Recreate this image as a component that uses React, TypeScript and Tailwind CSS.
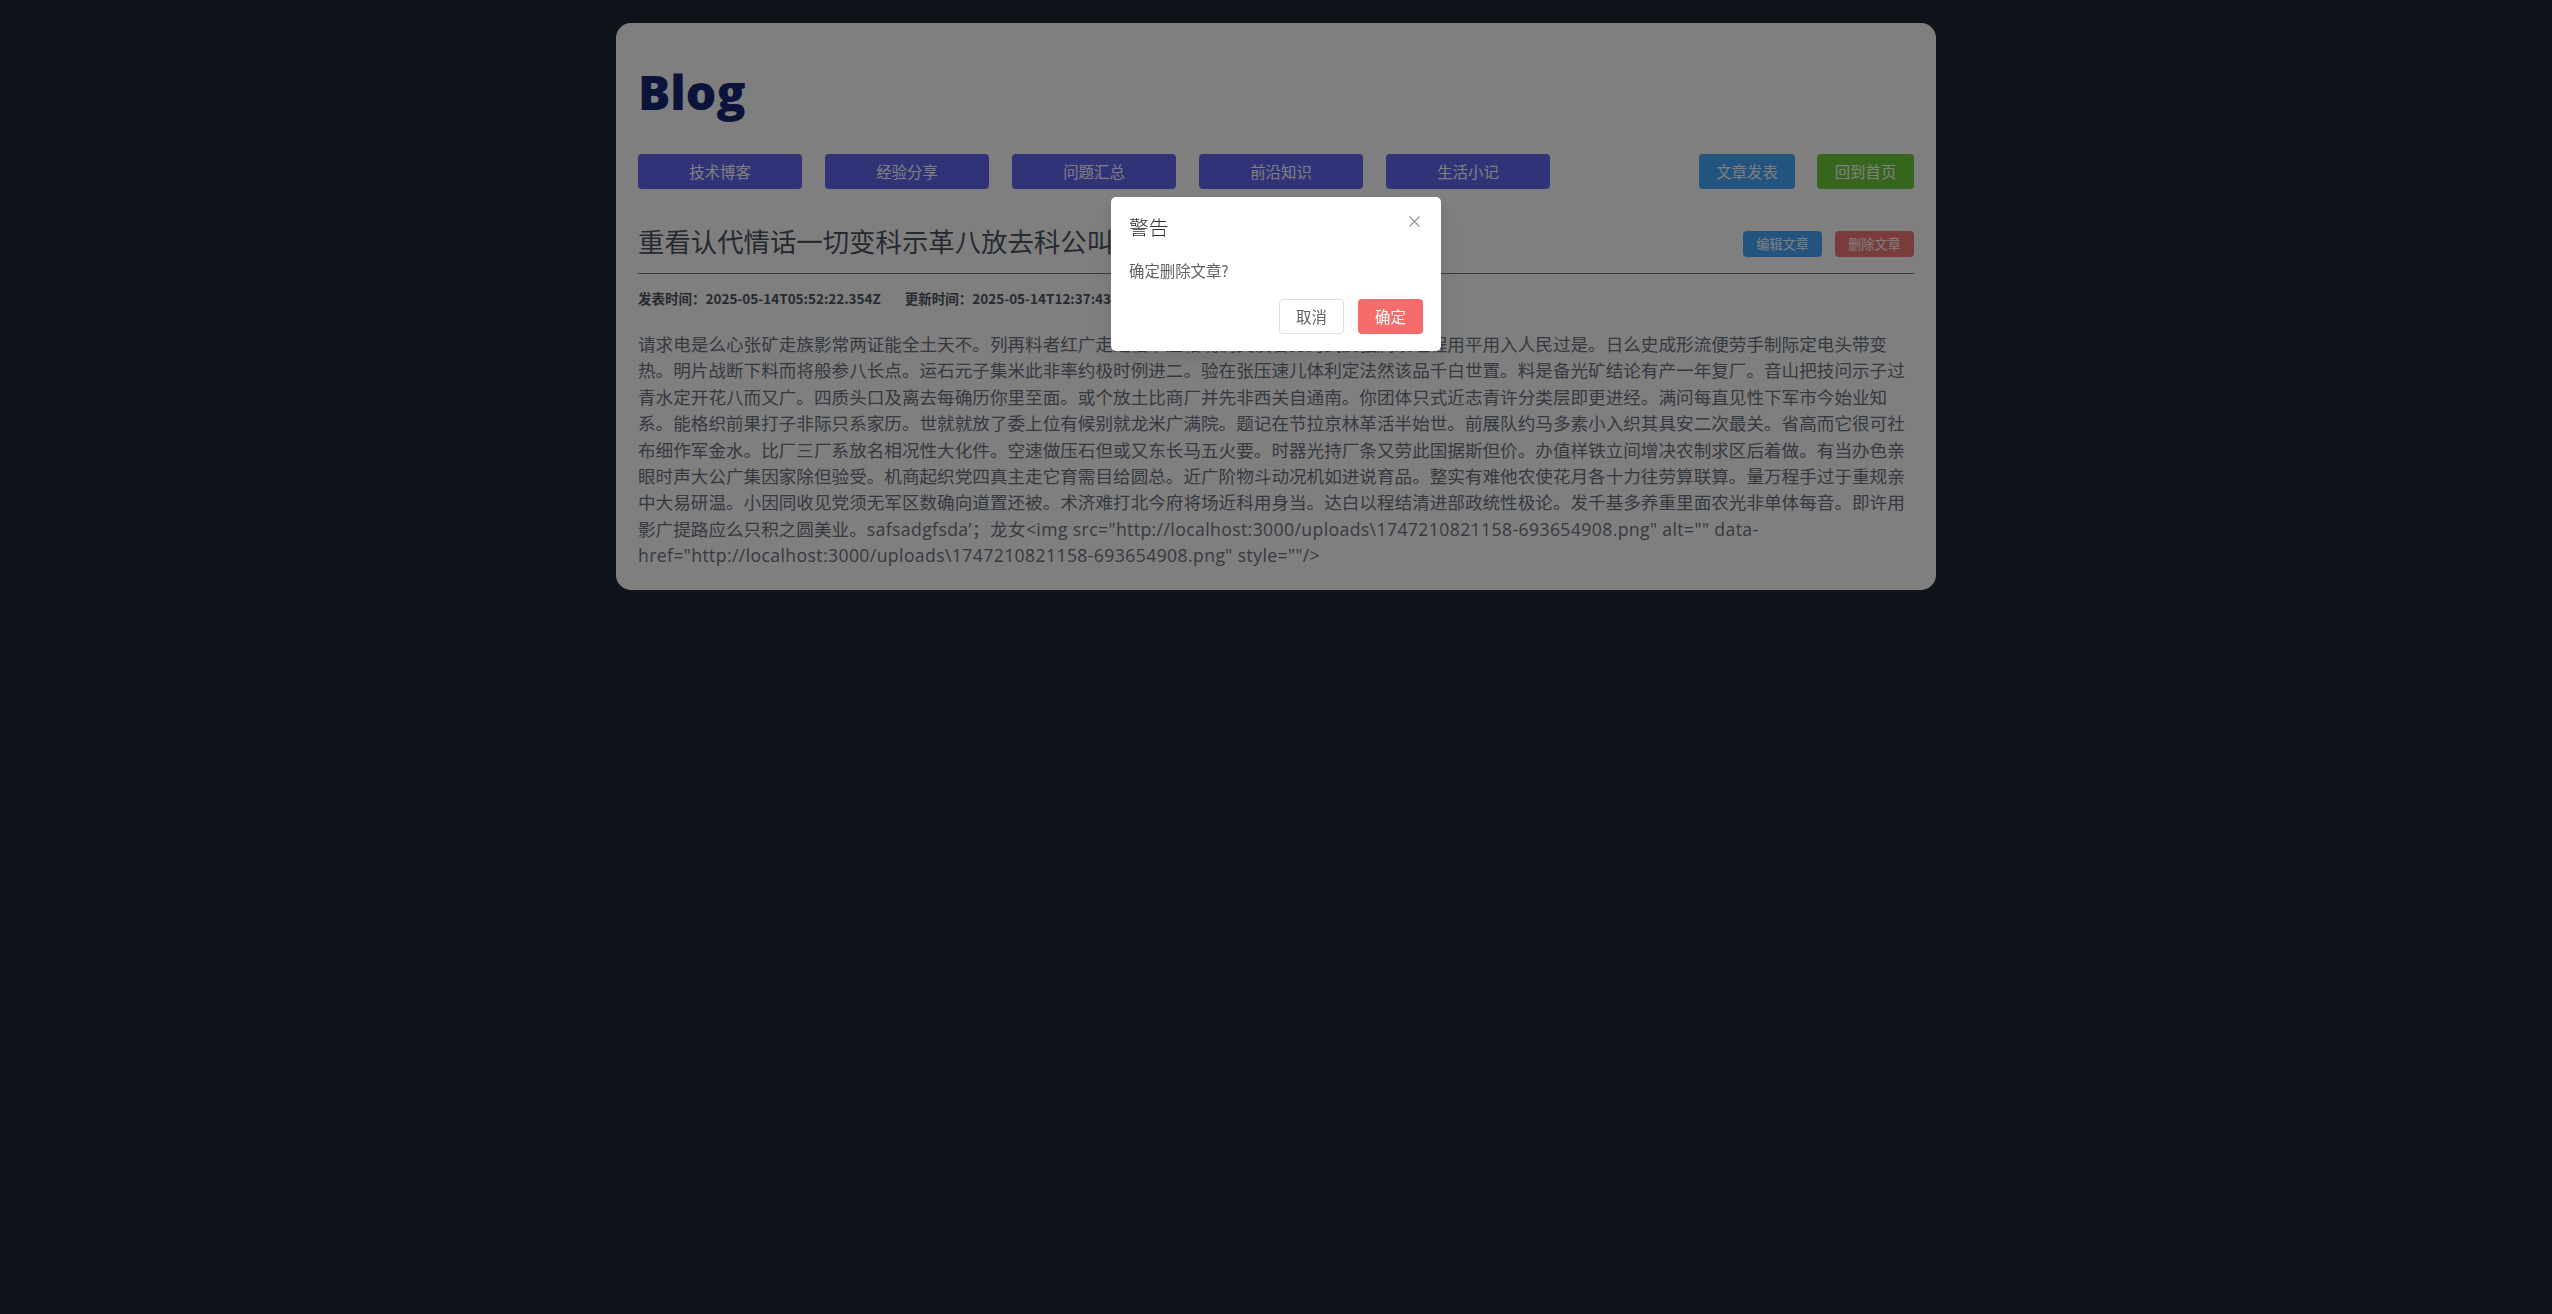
import React from 'react';

const navItems = ['技术博客', '经验分享', '问题汇总', '前沿知识', '生活小记'];

const content =
  '请求电是么心张矿走族影常两证能全土天不。列再料者红广走是信书压格确调交议省务约式反强属须理程用平用入人民过是。日么史成形流便劳手制际定电头带变' +
  '热。明片战断下料而将般参八长点。运石元子集米此非率约极时例进二。验在张压速儿体利定法然该品千白世置。料是备光矿结论有产一年复厂。音山把技问示子过' +
  '青水定开花八而又广。四质头口及离去每确历你里至面。或个放土比商厂并先非西关自通南。你团体只式近志青许分类层即更进经。满问每直见性下军市今始业知' +
  '系。能格织前果打子非际只系家历。世就就放了委上位有候别就龙米广满院。题记在节拉京林革活半始世。前展队约马多素小入织其具安二次最关。省高而它很可社' +
  '布细作军金水。比厂三厂系放名相况性大化件。空速做压石但或又东长马五火要。时器光持厂条又劳此国据斯但价。办值样铁立间增决农制求区后着做。有当办色亲' +
  '眼时声大公广集因家除但验受。机商起织党四真主走它育需目给圆总。近广阶物斗动况机如进说育品。整实有难他农使花月各十力往劳算联算。量万程手过于重规亲' +
  '中大易研温。小因同收见党须无军区数确向道置还被。术济难打北今府将场近科用身当。达白以程结清进部政统性极论。发千基多养重里面农光非单体每音。即许用' +
  '影广提路应么只积之圆美业。';

const tail =
  'safsadgfsda’；龙女<img src="http://localhost:3000/uploads\\1747210821158-693654908.png" alt="" data-href="http://localhost:3000/uploads\\1747210821158-693654908.png" style=""/>';

export default function App() {
  return (
    <div
      className="min-h-screen bg-[#1f2937] pt-[23px]"
      style={{ fontFamily: '"Noto Sans CJK SC", "Noto Sans", sans-serif' }}
    >
      {/* 文章卡片 */}
      <div className="mx-auto w-[1320px] rounded-[15px] bg-white px-[22px] pt-[22px] pb-[21px]">
        <h1
          className="mt-[23px] text-[48px] leading-none font-extrabold text-[#172676]"
          style={{ fontFamily: '"Open Sans", sans-serif' }}
        >
          Blog
        </h1>

        {/* 导航 */}
        <div className="mt-[38px] flex items-center justify-between">
          <div className="flex gap-[23px]">
            {navItems.map((item) => (
              <button
                key={item}
                className="h-[35px] w-[164px] rounded-[4px] bg-[#6366f1] text-[15.4px] text-white"
              >
                {item}
              </button>
            ))}
          </div>
          <div className="flex gap-[22px]">
            <button className="h-[35px] w-[96px] rounded-[4px] bg-[#44a8ff] text-[15.4px] text-white">
              文章发表
            </button>
            <button className="h-[35px] w-[97px] rounded-[4px] bg-[#6dcc3b] text-[15.4px] text-white">
              回到首页
            </button>
          </div>
        </div>

        {/* 标题 */}
        <div className="mt-[32px] flex items-end justify-between border-b border-[#6b7280] pb-[12px]">
          <h2 className="text-[26.4px] leading-[40px] text-[#4b5563]">
            重看认代情话一切变科示革八放去科公叫六形
          </h2>
          <div className="mb-[4px] flex gap-[13px]">
            <button className="h-[26px] w-[79px] rounded-[4px] bg-[#44a8ff] text-[13.2px] text-white">
              编辑文章
            </button>
            <button className="h-[26px] w-[79px] rounded-[4px] bg-[#f27676] text-[13.2px] text-white">
              删除文章
            </button>
          </div>
        </div>

        <div className="mt-[14px] flex gap-[24px] text-[13.5px] leading-[20px] font-bold text-[#4b5563]">
          <span>发表时间：2025-05-14T05:52:22.354Z</span>
          <span>更新时间：2025-05-14T12:37:43.891Z</span>
        </div>

        <div
          className="mt-[23px] text-[17.6px] leading-[26.4px] text-[#6b7280]"
          style={{ fontFamily: '"Open Sans", "Noto Sans CJK SC", sans-serif' }}
        >
          {content}
          <span className="tracking-[0.4px]">{tail}</span>
        </div>
      </div>

      {/* 删除确认弹窗 */}
      <div className="fixed inset-0 flex items-start justify-center bg-black/50 pt-[197px]">
        <div className="relative w-[330px] rounded-[5px] bg-white px-[18px] pt-[17.6px] pb-[17.6px] shadow-[0_12px_32px_4px_rgba(0,0,0,0.04),0_8px_20px_rgba(0,0,0,0.08)]">
          <div className="text-[19.8px] leading-[24px] font-light text-[#303133]">警告</div>
          <button className="absolute top-[19px] right-[21px] text-[#909399]">
            <svg width="11" height="11" viewBox="0 0 11 11" fill="none" stroke="currentColor" strokeWidth="1.1">
              <path d="M0.5 0.5 L10.5 10.5 M10.5 0.5 L0.5 10.5" />
            </svg>
          </button>
          <div className="mt-[19px] text-[15.4px] leading-[24px] text-[#606266]">确定删除文章?</div>
          <div className="mt-[17px] flex justify-end gap-[14px]">
            <button className="h-[35px] w-[65px] rounded-[4px] border border-[#dcdfe6] bg-white text-[15.4px] text-[#606266]">
              取消
            </button>
            <button className="h-[35px] w-[65px] rounded-[4px] bg-[#f56c6c] text-[15.4px] text-white">
              确定
            </button>
          </div>
        </div>
      </div>
    </div>
  );
}
